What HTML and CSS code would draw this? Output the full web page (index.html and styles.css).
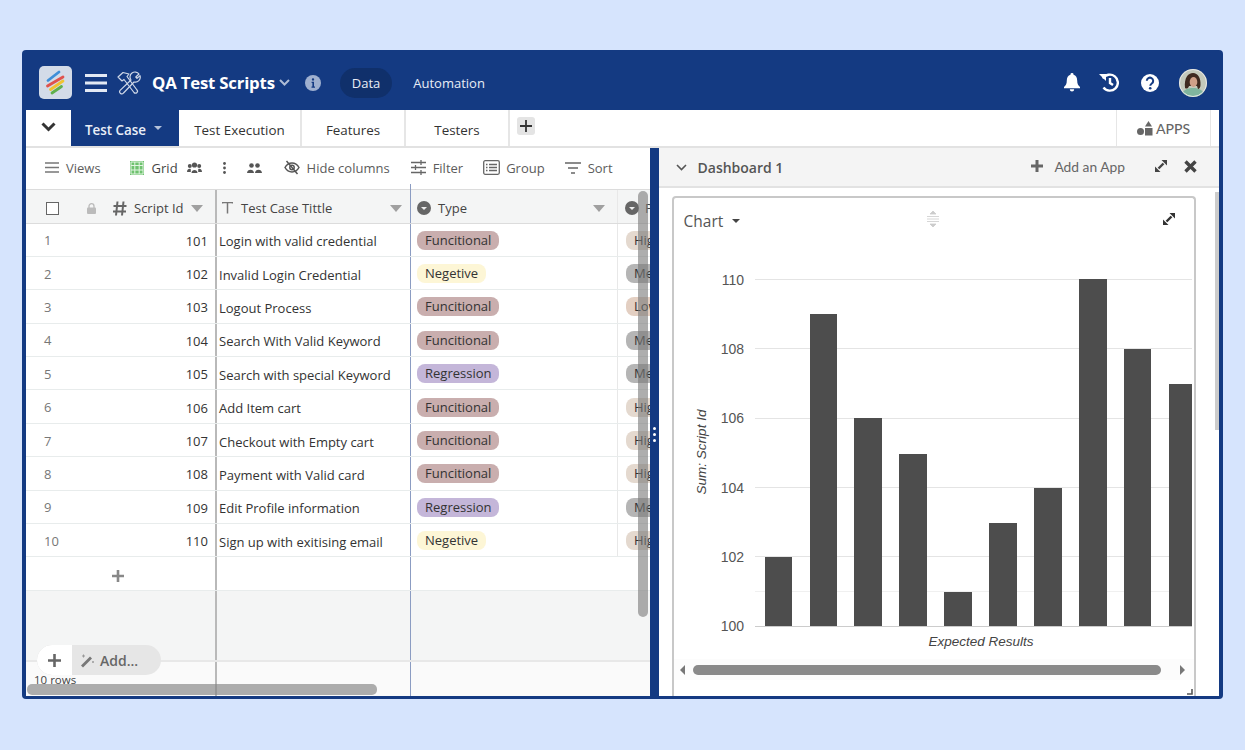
FILE: index.html
```html
<!DOCTYPE html>
<html lang="en">
<head>
  <meta charset="UTF-8">
  <title>QA Test Scripts</title>
  <link rel="stylesheet" href="styles.css">
</head>
<body>
  <div class="window">
    <header class="topbar">
      <div class="logo">
        <svg width="33" height="33" viewBox="0 0 33 33" stroke-width="2.800" stroke-linecap="round">
          <path d="M9 14.500L20 6" stroke="#3f8fd8"/>
          <path d="M8.500 20L24 11" stroke="#e0524d"/>
          <path d="M11.500 23.500L24 15" stroke="#f0c330"/>
          <path d="M13 27L22.500 20.500" stroke="#5fb04c"/>
        </svg>
      </div>
      <svg class="burger" width="22" height="20" viewBox="0 0 22 20"><path d="M0 2.500h22M0 10h22M0 17.500h22" stroke="#e3e9f4" stroke-width="3.200"/></svg>
      <svg class="tools" width="26" height="24" viewBox="0 0 26 24" fill="none" stroke="#cfd8e8" stroke-width="1.200" stroke-linejoin="round">
        <path d="M2 6 L7 1.500 L13 3 L11 5.500 L21 19 a1.800 1.800 0 0 1 -3 2.500 L8 8.500 L6 10 Z"/>
        <path d="M16 2 a5 5 0 0 1 7 1 l-3.200 3 l1.200 1.400 l3 -2.800 a5 5 0 0 1 -6 6.400 L7.500 22 a2 2 0 0 1 -3.400 -2.600 L15 9 a5 5 0 0 1 1 -7 Z"/>
      </svg>
      <div class="base-name">QA Test Scripts</div>
      <svg class="base-caret" width="11" height="7" viewBox="0 0 11 7"><path d="M1 1l4.500 4.500L10 1" fill="none" stroke="#aebcd6" stroke-width="2"/></svg>
      <svg class="info" width="16" height="16" viewBox="0 0 16 16"><circle cx="8" cy="8" r="8" fill="#9fb0d0"/><path d="M8 3.200a1.200 1.200 0 1 1 0 2.400a1.200 1.200 0 0 1 0-2.400zM6.600 6.800h2.400v4.600h1v1.300h-3.500v-1.300h.9v-3.300h-.8z" fill="#143a82"/></svg>
      <a class="nav-pill active">Data</a>
      <a class="nav-pill">Automation</a>
      <div class="topbar-right">
        <svg class="bell" width="16" height="19" viewBox="0 0 16 19"><path d="M8 0a1.500 1.500 0 0 1 1.500 1.700C12 2.400 13.200 4.500 13.200 7.500c0 3.500 1 4.800 2.800 6.500v1.300H0V14c1.800-1.700 2.800-3 2.800-6.500c0-3 1.200-5.100 3.700-5.800A1.500 1.500 0 0 1 8 0zM5.800 16.300h4.400a2.200 2.200 0 0 1-4.400 0z" fill="#fff"/></svg>
        <svg width="20" height="19" viewBox="0 0 20 19" fill="none" stroke="#fff" stroke-width="2.400"><path d="M4 5.500A8 8 0 1 1 4.500 14.500"/><path d="M0 1L7 1L7 8Z" fill="#fff" stroke="none"/><path d="M11 5v5l3 2"/></svg>
        <svg width="18" height="18" viewBox="0 0 18 18"><circle cx="9" cy="9" r="9" fill="#fff"/><path d="M5.800 6.800a3.200 3.200 0 1 1 5 2.700c-1.100.8-1.500 1.200-1.500 2.200" fill="none" stroke="#143a82" stroke-width="2"/><circle cx="9.200" cy="14.300" r="1.300" fill="#143a82"/></svg>
        <svg class="avatar" width="28" height="28" viewBox="0 0 28 28">
          <defs><clipPath id="av"><circle cx="14" cy="14" r="14"/></clipPath></defs>
          <g clip-path="url(#av)">
            <rect width="28" height="28" fill="#c4c9bb"/>
            <path d="M2 28c1-7 6-9 12-9s11 2 12 9z" fill="#7fb59e"/>
            <path d="M6 19C5 9 9 4 14 4s8 5 7.500 12c0 2-1 4-2.500 4l-1-3H10s-1 4-4 2z" fill="#3f2a20"/>
            <ellipse cx="14.500" cy="13" rx="3.800" ry="5" fill="#cfa088"/>
          </g>
          <circle cx="14" cy="14" r="13.500" fill="none" stroke="#e8e8e8"/>
        </svg>
      </div>
    </header>

    <nav class="tabbar">
      <div class="tab-toggle"><svg width="15" height="10" viewBox="0 0 15 10"><path d="M1.500 1.500l6 6 6-6" fill="none" stroke="#333" stroke-width="3"/></svg></div>
      <div class="tab active">Test Case <span class="tab-caret"></span></div>
      <div class="tab wide">Test Execution</div>
      <div class="tab">Features</div>
      <div class="tab">Testers</div>
      <button class="tab-add"><svg width="12" height="12" viewBox="0 0 12 12"><path d="M6 0v12M0 6h12" stroke="#333" stroke-width="1.800"/></svg></button>
      <div class="tab-apps">
        <svg width="16" height="15" viewBox="0 0 16 15"><circle cx="3.500" cy="10.500" r="3.500" fill="#666"/><path d="M11.500 0l3.500 5.500h-7z" fill="#666"/><rect x="8" y="7" width="7.500" height="7.500" fill="#666"/></svg>
        APPS
      </div>
    </nav>

    <main class="panes">
      <section class="left-pane">
        <div class="toolbar">
          <div class="tool views">
            <svg width="14" height="11" viewBox="0 0 14 11"><path d="M0 1h14M0 5.500h14M0 10h14" stroke="#777" stroke-width="1.400"/></svg>
            Views
          </div>
          <div class="tool grid-view">
            <svg width="14" height="14" viewBox="0 0 14 14"><rect width="14" height="14" fill="#6fc26f"/><path d="M1 4.500h12M1 9h12M4.800 1v12M9.200 1v12M1 1h12v12H1z" stroke="#e3f5e3" fill="none"/></svg>
            <strong>Grid</strong>
          </div>
          <svg class="tool-icon shared" width="15" height="12" viewBox="0 0 15 12"><circle cx="7.500" cy="3" r="2.600" fill="#555"/><circle cx="2.800" cy="4" r="2" fill="#555"/><circle cx="12.200" cy="4" r="2" fill="#555"/><path d="M4.500 11c0-4 6-4 6 0zM0 10c0-3.500 3-3.500 3.800-2.800v2.800zM15 10c0-3.500-3-3.500-3.800-2.800v2.800z" fill="#555"/></svg>
          <svg class="tool-icon dots" width="3" height="12" viewBox="0 0 3 12"><circle cx="1.500" cy="1.500" r="1.400" fill="#555"/><circle cx="1.500" cy="6" r="1.400" fill="#555"/><circle cx="1.500" cy="10.500" r="1.400" fill="#555"/></svg>
          <svg class="tool-icon people" width="15" height="10" viewBox="0 0 15 10"><circle cx="4.500" cy="2.500" r="2.300" fill="#555"/><circle cx="10.500" cy="2.500" r="2.300" fill="#555"/><path d="M0 10c0-4.500 7-4.500 7 0zM8 10c0-4.500 7-4.500 7 0z" fill="#555"/></svg>
          <div class="tool hide">
            <svg width="16" height="15" viewBox="0 0 16 15" fill="none" stroke="#555" stroke-width="1.500"><path d="M1 7.500C3 4 5.500 3 8 3s5 1 7 4.500C13 11 10.500 12 8 12S3 11 1 7.500z"/><circle cx="8" cy="7.500" r="2.200"/><path d="M2.500 1l11 13"/></svg>
            Hide columns
          </div>
          <div class="tool filter">
            <svg width="15" height="15" viewBox="0 0 15 15" fill="none" stroke="#666" stroke-width="1.300"><path d="M0 2.500h15M0 7.500h15M0 12.500h15M10 0v5M4.500 5v5M10 10v5"/></svg>
            Filter
          </div>
          <div class="tool group">
            <svg width="17" height="15" viewBox="0 0 17 15" fill="none" stroke="#666" stroke-width="1.300"><rect x=".7" y=".7" width="15.600" height="13.600" rx="1.500"/><path d="M3 4.500h1.500M6 4.500h8M3 7.500h1.500M6 7.500h8M3 10.500h1.500M6 10.500h8"/></svg>
            Group
          </div>
          <div class="tool sort">
            <svg width="16" height="12" viewBox="0 0 16 12"><path d="M0 1h16M3 6h10M6 11h4" stroke="#666" stroke-width="1.500"/></svg>
            Sort
          </div>
        </div>

        <div class="table">
          <div class="row thead">
            <div class="cell col-id">
              <span class="checkbox"></span>
              <svg class="lock" width="9" height="11" viewBox="0 0 9 11"><path d="M2 5V3.200a2.500 2.500 0 0 1 5 0V5" fill="none" stroke="#bbb" stroke-width="1.300"/><rect y="4.500" width="9" height="6.500" rx="1" fill="#bbb"/></svg>
              <svg class="hash" width="14" height="15" viewBox="0 0 14 15"><path d="M4.500 0.500L3 14.500M10.500 0.500L9 14.500M0.500 5h13M0 10.500h13" stroke="#666" stroke-width="2"/></svg>
              <span class="th-text">Script Id</span>
              <span class="th-caret"></span>
            </div>
            <div class="cell col-title">
              <svg class="type-t" width="11" height="12" viewBox="0 0 11 12"><path d="M0.500 1.500v-1h10v1M5.500 0.500v11" fill="none" stroke="#777" stroke-width="1.500"/></svg>
              <span class="th-text">Test Case Tittle</span>
              <span class="th-caret push"></span>
            </div>
            <div class="cell col-type">
              <svg class="th-icon" width="14" height="14" viewBox="0 0 14 14"><circle cx="7" cy="7" r="7" fill="#666"/><path d="M4 6h6L7 9z" fill="#eee"/></svg>
              <span class="th-text">Type</span>
              <span class="th-caret push"></span>
            </div>
            <div class="cell col-next">
              <svg class="th-icon" width="14" height="14" viewBox="0 0 14 14"><circle cx="7" cy="7" r="7" fill="#666"/><path d="M4 6h6L7 9z" fill="#eee"/></svg>
              <span class="th-text">P</span>
            </div>
          </div>

          <div class="row"><div class="cell col-id"><span class="num">1</span><span class="id">101</span></div><div class="cell col-title">Login with valid credential</div><div class="cell col-type"><span class="pill func">Funcitional</span></div><div class="cell col-next"><span class="pill high">High</span></div></div>
          <div class="row"><div class="cell col-id"><span class="num">2</span><span class="id">102</span></div><div class="cell col-title">Invalid Login Credential</div><div class="cell col-type"><span class="pill neg">Negetive</span></div><div class="cell col-next"><span class="pill med">Medium</span></div></div>
          <div class="row"><div class="cell col-id"><span class="num">3</span><span class="id">103</span></div><div class="cell col-title">Logout Process</div><div class="cell col-type"><span class="pill func">Funcitional</span></div><div class="cell col-next"><span class="pill low">Low</span></div></div>
          <div class="row"><div class="cell col-id"><span class="num">4</span><span class="id">104</span></div><div class="cell col-title">Search With Valid Keyword</div><div class="cell col-type"><span class="pill func">Funcitional</span></div><div class="cell col-next"><span class="pill med">Medium</span></div></div>
          <div class="row"><div class="cell col-id"><span class="num">5</span><span class="id">105</span></div><div class="cell col-title">Search with special Keyword</div><div class="cell col-type"><span class="pill reg">Regression</span></div><div class="cell col-next"><span class="pill med">Medium</span></div></div>
          <div class="row"><div class="cell col-id"><span class="num">6</span><span class="id">106</span></div><div class="cell col-title">Add Item cart</div><div class="cell col-type"><span class="pill func">Funcitional</span></div><div class="cell col-next"><span class="pill high">High</span></div></div>
          <div class="row"><div class="cell col-id"><span class="num">7</span><span class="id">107</span></div><div class="cell col-title">Checkout with Empty cart</div><div class="cell col-type"><span class="pill func">Funcitional</span></div><div class="cell col-next"><span class="pill high">High</span></div></div>
          <div class="row"><div class="cell col-id"><span class="num">8</span><span class="id">108</span></div><div class="cell col-title">Payment with Valid card</div><div class="cell col-type"><span class="pill func">Funcitional</span></div><div class="cell col-next"><span class="pill high">High</span></div></div>
          <div class="row"><div class="cell col-id"><span class="num">9</span><span class="id">109</span></div><div class="cell col-title">Edit Profile information</div><div class="cell col-type"><span class="pill reg">Regression</span></div><div class="cell col-next"><span class="pill med">Medium</span></div></div>
          <div class="row"><div class="cell col-id"><span class="num">10</span><span class="id">110</span></div><div class="cell col-title">Sign up with exitising email</div><div class="cell col-type"><span class="pill neg">Negetive</span></div><div class="cell col-next"><span class="pill high">High</span></div></div>

          <div class="row add-row">
            <div class="cell col-id"><svg width="12" height="12" viewBox="0 0 12 12"><path d="M6 0v12M0 6h12" stroke="#888" stroke-width="2.600"/></svg></div>
            <div class="cell col-title"></div>
            <div class="cell col-type blank"></div>
          </div>
          <div class="row filler">
            <div class="cell col-id"></div>
            <div class="cell col-title"></div>
            <div class="cell col-type blank"></div>
          </div>
          <div class="row foot">
            <div class="cell col-id"></div>
            <div class="cell col-title"></div>
            <div class="cell col-type blank"></div>
          </div>
        </div>

        <div class="add-pill">
          <span class="add-plus"><svg width="13" height="13" viewBox="0 0 13 13"><path d="M6.500 0v13M0 6.500h13" stroke="#666" stroke-width="2.600"/></svg></span>
          <span class="add-more">
            <svg width="15" height="15" viewBox="0 0 15 15"><path d="M1 12.500L10 3.500l2 2L3 14.500z" fill="#777"/><path d="M2 3h3M3.500 1.500v3M12 9h2M13 8v2" stroke="#999"/></svg>
            Add...
          </span>
        </div>
        <div class="row-count">10 rows</div>
        <div class="scroll-v"></div>
        <div class="scroll-h"></div>
        <div class="col-guide"></div>
      </section>

      <div class="divider"><i></i><i></i><i></i></div>

      <section class="right-pane">
        <div class="dash-head">
          <svg width="11" height="7" viewBox="0 0 11 7"><path d="M1 1l4.500 4.500L10 1" fill="none" stroke="#555" stroke-width="1.600"/></svg>
          <span class="dash-title">Dashboard 1</span>
          <div class="dash-actions">
            <svg width="12" height="12" viewBox="0 0 12 12"><path d="M6 0v12M0 6h12" stroke="#666" stroke-width="3"/></svg>
            <span class="add-app">Add an App</span>
            <svg class="expand" width="12" height="12" viewBox="0 0 12 12"><path d="M3.500 8.500l5-5" stroke="#444" stroke-width="2.400"/><path d="M6.500 0H12V5.500zM0 6.500L5.500 12H0z" fill="#444"/></svg>
            <svg class="close" width="13" height="13" viewBox="0 0 13 13"><path d="M1.500 1.500l10 10M11.500 1.500l-10 10" stroke="#444" stroke-width="3.400"/></svg>
          </div>
        </div>
        <div class="dash-body">
          <div class="chart-card">
            <div class="chart-head">
              <span class="chart-name">Chart</span>
              <span class="chart-caret"></span>
              <svg class="drag" width="14" height="16" viewBox="0 0 14 16"><path d="M7 0l3 3H4zM7 16l-3-3h6zM1 5.500h12M1 8h12M1 10.500h12" fill="#ccc" stroke="#ccc" stroke-width=".8"/></svg>
              <svg class="chart-expand" width="12" height="12" viewBox="0 0 12 12"><path d="M3.500 8.500l5-5" stroke="#333" stroke-width="2.400"/><path d="M6.500 0H12V5.500zM0 6.500L5.500 12H0z" fill="#333"/></svg>
            </div>
            <svg class="plot" width="519" height="396" viewBox="0 0 519 396">
              <g stroke="#e4e4e4"><path d="M81 19.500h437M81 88.500h437M81 158.500h437M81 227.500h437M81 296.500h437"/><path d="M81 331.500h437" stroke="#f0f0f0"/><path d="M81 366.500h437" stroke="#ccc"/></g>
              <g fill="#4d4d4d">
                <rect x="91" y="297" width="27" height="69"/>
                <rect x="136" y="54" width="27" height="312"/>
                <rect x="180" y="158" width="28" height="208"/>
                <rect x="225" y="194" width="28" height="172"/>
                <rect x="270" y="332" width="28" height="34"/>
                <rect x="315" y="263" width="28" height="103"/>
                <rect x="360" y="228" width="28" height="138"/>
                <rect x="405" y="19" width="28" height="347"/>
                <rect x="450" y="89" width="27" height="277"/>
                <rect x="495" y="124" width="23" height="242"/>
              </g>
              <g class="axis-y" text-anchor="end">
                <text x="70" y="25">110</text>
                <text x="70" y="94">108</text>
                <text x="70" y="163">106</text>
                <text x="70" y="233">104</text>
                <text x="70" y="302">102</text>
                <text x="70" y="371">100</text>
              </g>
              <text class="axis-title" transform="translate(32 192) rotate(-90)" text-anchor="middle">Sum: Script Id</text>
              <text class="axis-title x-title" x="307" y="386" text-anchor="middle">Expected Results</text>
            </svg>
            <div class="chart-scroll">
              <span class="arrow left"></span>
              <span class="chart-thumb"></span>
              <span class="arrow right"></span>
            </div>
            <svg class="resize" width="6" height="6" viewBox="0 0 6 6"><path d="M5 0v5H0" fill="none" stroke="#555" stroke-width="1.600"/></svg>
          </div>
        </div>
        <div class="dash-scroll"></div>
      </section>
    </main>
  </div>
</body>
</html>
```

FILE: styles.css
```css
* {
  box-sizing: border-box;
}
html, body {
  margin: 0;
  height: 100%;
  overflow: hidden;
}
body {
  background-color: #d6e4fd;
  font-family: "Open Sans", sans-serif;
  font-size: 13px;
  color: #333;
  padding: 50px 22px 51px;
}
.window {
  height: 649px;
  width: 1201px;
  display: flex;
  flex-direction: column;
  border: solid #143a82;
  border-width: 0 4px 3px 4px;
  border-radius: 4px;
  overflow: hidden;
  background-color: #fff;
}

/* top bar */
.topbar {
  height: 60px;
  flex: none;
  margin: 0 -4px;
  padding: 5px 16px 0 17px;
  background-color: #143a82;
  display: flex;
  align-items: center;
  color: #fff;
}
.logo {
  width: 33px;
  height: 33px;
  border-radius: 5px;
  background-color: #d3dbe8;
  display: flex;
  align-items: center;
  justify-content: center;
}
.burger { margin-left: 13px; }
.tools { margin-left: 9px; }
.base-name {
  margin-left: 10px;
  font-size: 16.800px;
  font-weight: 700;
  letter-spacing: -0.2px;
}
.base-caret { margin-left: 4px; }
.info { margin-left: 15px; }
.nav-pill {
  margin-left: 21px;
  padding: 0 12px;
  height: 30px;
  line-height: 30px;
  border-radius: 15px;
  font-size: 13px;
  color: #e8edf6;
}
.nav-pill.active {
  margin-left: 19px;
  background-color: #10306b;
}
.nav-pill.active + .nav-pill {
  padding: 0;
}
.topbar-right {
  margin-left: auto;
  display: flex;
  align-items: center;
  gap: 22px;
}
.topbar-right .bell { margin-right: -3px; }
.topbar-right .avatar { margin-left: -2px; }

/* tabs */
.tabbar {
  height: 38px;
  flex: none;
  display: flex;
  border-bottom: 2px solid #e2e2e2;
  background-color: #fff;
}
.tab-toggle {
  width: 45px;
  display: flex;
  align-items: center;
  justify-content: center;
  padding-bottom: 3px;
}
.tab {
  width: 104px;
  display: flex;
  align-items: center;
  justify-content: center;
  border-right: 2px solid #e6e6e6;
  font-size: 13.400px;
  color: #333;
  padding-top: 3px;
}
.tab.wide { width: 123px; }
.tab.active {
  width: 108px;
  padding-right: 3px;
  background-color: #143a82;
  color: #e9eef7;
  font-weight: 600;
  border-right: 0;
  gap: 8px;
}
.tab-caret {
  border: 4.500px solid transparent;
  border-top-color: #b5c2da;
  border-bottom-width: 0;
  margin-top: -4px;
}
.tab-add {
  width: 18px;
  height: 18px;
  margin: 7px 0 0 7px;
  padding: 0;
  border: 0;
  border-radius: 3px;
  background-color: #e4e4e4;
  display: flex;
  align-items: center;
  justify-content: center;
}
.tab-apps {
  margin: 0 8px 0 auto;
  width: 95px;
  display: flex;
  align-items: center;
  justify-content: center;
  gap: 3px;
  border: solid #e6e6e6;
  border-width: 0 1px;
  font-family: Lato, sans-serif;
  font-size: 14px;
  font-weight: 500;
  color: #666;
}

/* left pane */
.panes {
  flex: 1;
  min-height: 0;
  display: flex;
}
.left-pane {
  position: relative;
  width: 624px;
  flex: none;
  overflow: hidden;
  display: flex;
  flex-direction: column;
}
.toolbar {
  height: 41px;
  flex: none;
  display: flex;
  align-items: center;
  padding: 0 0 2px 19px;
  color: #5c5c5c;
}
.tool {
  display: flex;
  align-items: center;
  gap: 7px;
  white-space: nowrap;
}
.tool strong {
  font-weight: 500;
  color: #444;
  margin-left: 1px;
}
.grid-view { margin-left: 29px; }
.shared { margin-left: 9px; }
.dots { margin-left: 21px; }
.people { margin-left: 21px; }
.hide { margin-left: 22px; }
.filter { margin-left: 21px; }
.group { margin-left: 20px; gap: 6px; }
.sort { margin-left: 20px; }

.table {
  flex: 1;
  display: flex;
  flex-direction: column;
  min-height: 0;
}
.row {
  display: grid;
  grid-template-columns: 191px 194px 207px 32px;
  height: 33.400px;
  flex: none;
  border-bottom: 1px solid #e8ecec;
}
.cell {
  display: flex;
  align-items: center;
  min-width: 0;
  overflow: hidden;
  white-space: nowrap;
  font-size: 13px;
  padding-top: 1px;
}
.col-id {
  padding: 1px 7px 0 18px;
  border-right: 2px solid #b9b9b9;
  justify-content: space-between;
}
.col-title {
  padding: 3px 0 0 2px;
  border-right: 1px solid #8b9cc2;
}
.col-type {
  padding-left: 6px;
  border-right: 1px solid #e8e8e8;
}
.col-type.blank { border-right: 0; }
.col-next {
  padding-left: 8px;
  overflow: hidden;
}
.num { color: #777; }
.id { padding-top: 1px; }
.pill {
  height: 19px;
  line-height: 19px;
  padding: 0 8px;
  border-radius: 8px;
  font-size: 13px;
  flex: none;
}
.func { background-color: #c9aeae; }
.reg { background-color: #c4b6d9; }
.neg { background-color: #fdf6d6; }
.high { background-color: #e4d9cf; }
.med { background-color: #b5b5b5; }
.low { background-color: #e3cfc2; }

.thead {
  height: 34.500px;
  background-color: #f4f5f5;
  border-top: 1px solid #dcdcdc;
  border-bottom: 1px solid #dcdcdc;
  color: #444;
}
.thead .cell { padding-top: 4px; }
.thead .col-id {
  justify-content: flex-start;
  padding-right: 0;
  padding-left: 20px;
}
.thead .col-title { padding-left: 5px; }
.th-icon { flex: none; }
.col-next .th-icon { margin-left: -1px; }
.th-text { margin-left: 7px; }
.col-title .th-text { margin-left: 8px; }
.col-next .th-text { margin-left: 6px; }
.checkbox {
  width: 13px;
  height: 13px;
  border: 1px solid #666;
  background-color: #fff;
  flex: none;
}
.lock { margin-left: 28px; }
.hash { margin-left: 17px; }
.th-caret {
  border: 6px solid transparent;
  border-top: 7px solid #a0a0a0;
  border-bottom: 0;
  margin-left: 7px;
  flex: none;
}
.th-caret.push {
  margin-left: auto;
  margin-right: 8px;
}
.col-type .th-caret.push { margin-right: 12px; }

.add-row .col-id {
  justify-content: center;
  padding: 4px 6px 0 0;
}
.filler {
  height: 71px;
  background-color: #f4f5f5;
  border-bottom: 2px solid #e8e8e8;
}
.foot {
  flex: 1;
  background-color: #fafafa;
  border-bottom: 0;
}

/* things floating over the table */
.add-pill {
  position: absolute;
  left: 11px;
  top: 497px;
  height: 30px;
  display: flex;
  border-radius: 15px;
  overflow: hidden;
  background-color: #e6e6e6;
  font-weight: 600;
  color: #666;
}
.add-plus {
  width: 35px;
  background-color: #fff;
  border-radius: 15px 0 0 15px;
  display: flex;
  align-items: center;
  justify-content: center;
}
.add-more {
  display: flex;
  align-items: center;
  gap: 5px;
  padding: 0 23px 0 8px;
  font-size: 14px;
}
.row-count {
  position: absolute;
  left: 8px;
  top: 524px;
  font-size: 11.500px;
  color: #444;
}
.scroll-v {
  position: absolute;
  right: 2px;
  top: 43px;
  width: 10px;
  height: 426px;
  border-radius: 5px;
  background-color: rgba(120, 120, 120, 0.6);
}
.scroll-h {
  position: absolute;
  left: 1px;
  top: 536px;
  width: 350px;
  height: 11px;
  border-radius: 5px;
  background-color: rgba(130, 130, 130, 0.65);
}
.col-guide {
  position: absolute;
  left: 384px;
  top: 36px;
  width: 1px;
  height: 6px;
  background-color: #8b9cc2;
}

/* divider */
.divider {
  width: 8.500px;
  flex: none;
  background-color: #143a82;
  display: flex;
  flex-direction: column;
  align-items: center;
  justify-content: center;
  gap: 3px;
  padding-top: 24px;
}
.divider i {
  width: 3px;
  height: 3px;
  border-radius: 50%;
  background-color: #fff;
}

/* right pane */
.right-pane {
  position: relative;
  flex: 1;
  min-width: 0;
  display: flex;
  flex-direction: column;
}
.dash-head {
  height: 40px;
  flex: none;
  display: flex;
  align-items: center;
  padding: 0 22px 0 17px;
  background-color: #f4f4f4;
  border-bottom: 2px solid #e2e2e2;
  color: #555;
}
.dash-title {
  margin-left: 11px;
  font-size: 14px;
  font-weight: 600;
}
.dash-actions {
  margin-left: auto;
  display: flex;
  align-items: center;
  margin-top: -2px;
}
.add-app {
  margin-left: 11px;
  font-family: Lato, sans-serif;
  font-size: 13.800px;
  color: #666;
}
.expand { margin-left: 30px; }
.close { margin-left: 17px; }
.dash-body {
  flex: 1;
  min-height: 0;
  padding: 8px 23px 0 13px;
}
.chart-card {
  position: relative;
  height: 100%;
  border: solid #c8c8c8;
  border-width: 2px 2px 0 2px;
  border-radius: 4px 4px 0 0;
}
.chart-head {
  height: 46px;
  display: flex;
  align-items: center;
  padding: 0 19px 0 10px;
  font-size: 15.500px;
  color: #555;
}
.chart-caret {
  border: 4.500px solid transparent;
  border-top-color: #444;
  border-bottom-width: 0;
  margin-left: 9px;
}
.drag { margin-left: 186px; margin-top: -4px; }
.chart-expand { margin-left: auto; margin-top: -4px; }
.plot { display: block; margin-top: 16px; }
.plot text { font-family: "Liberation Sans", sans-serif; }
.axis-y text { font-size: 14px; fill: #555; }
.axis-title { font-size: 13.500px; font-style: italic; fill: #444; }
.x-title { font-size: 13.500px; }
.chart-scroll {
  height: 21px;
  margin-top: 3px;
  display: flex;
  align-items: center;
  padding: 0 7px 0 6px;
  background-color: #fcfcfc;
}
.chart-thumb {
  width: 468px;
  height: 10px;
  border-radius: 5px;
  margin: 0 19px 0 8px;
  background-color: #8a8a8a;
}
.arrow {
  border: 5px solid transparent;
  border-left-width: 0;
  border-right-color: #777;
}
.arrow.right {
  border-left: 5px solid #777;
  border-right: 0;
}
.resize {
  position: absolute;
  right: 1px;
  bottom: 1px;
}
.dash-scroll {
  position: absolute;
  right: 0;
  top: 44px;
  width: 4px;
  height: 238px;
  background-color: #ccc;
}
```
